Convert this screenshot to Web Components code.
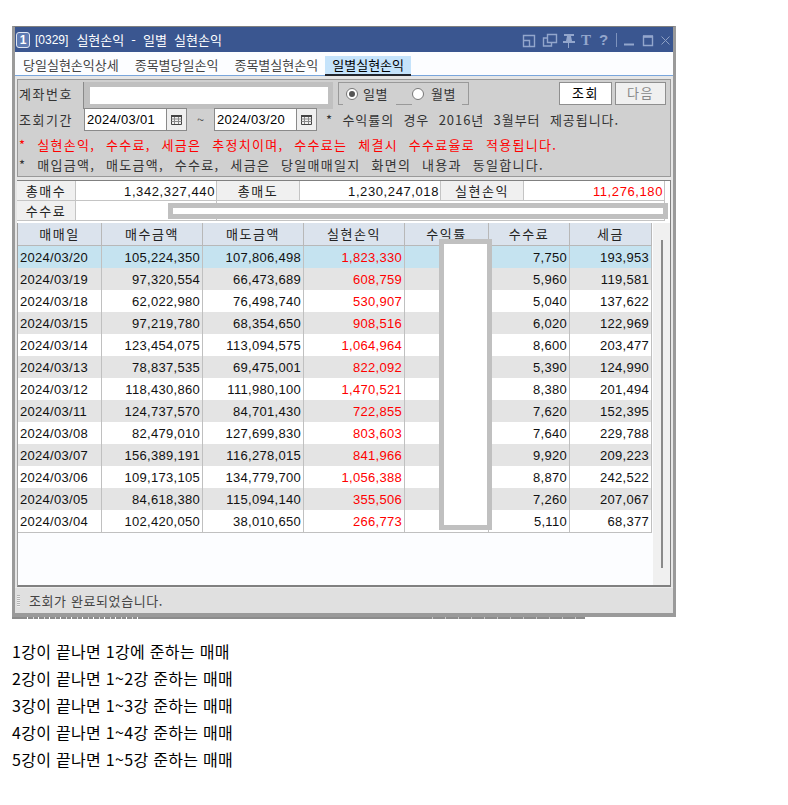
<!DOCTYPE html>
<html lang="ko">
<head>
<meta charset="utf-8">
<style>
  html, body { margin: 0; background: #fff; }
  body { padding: 26px 0 0 12px; font-family: "Noto Sans CJK KR", sans-serif; }
</style>
</head>
<body>
<trade-window></trade-window>
<note-list></note-list>

<script>
const KR = '"Noto Sans CJK KR", sans-serif';
const NUM = '"Liberation Sans", "Noto Sans CJK KR", sans-serif';

class TitleBar extends HTMLElement {
  constructor() {
    super();
    this.attachShadow({ mode: 'open' });
  }

  connectedCallback() {
    this.shadowRoot.innerHTML = `
      <style>
      :host { display: flex; align-items: center; height: 25px; background: #3a5690; color: #fff; padding-left: 1px; font: 13px ${KR}; }
      .logo { width: 12px; height: 14px; margin-right: 5px; border: 1px solid #dfe6f2; border-radius: 3px; background: #5f7cb4; color: #fff; font: bold 12px/14px "Liberation Sans", sans-serif; text-align: center; }
      .num { font-family: ${NUM}; font-size: 12px; margin-right: 8px; }
      .name { white-space: pre; word-spacing: 3.5px; }
      svg { margin-left: auto; display: block; }
      </style>
      <span class="logo">1</span>
      <span class="num">[0329]</span>
      <span class="name">실현손익 - 일별 실현손익</span>
      <svg width="152" height="25" viewBox="0 0 152 25" fill="none" stroke="#93a6cc" stroke-width="1.4">
        <path d="M2.500 8.500h11v11h-11zM2.500 13.500h6v6"/>
        <path d="M26.500 7.500h9v8h-9zM26.500 11h-4v8h8v-3.500"/>
        <path d="M43 7h10v2h-3l1 5h3v2H42v-2h3l1-5h-3zM48 16v5" fill="#93a6cc" stroke="none"/>
        <path d="M47.500 16v5" stroke-width="1"/>
        <text x="60" y="18" fill="#93a6cc" stroke="none" font-family="Liberation Serif" font-weight="700" font-size="15">T</text>
        <text x="78" y="18" fill="#93a6cc" stroke="none" font-family="Liberation Sans" font-weight="700" font-size="15">?</text>
        <path d="M95.500 6v14" stroke="#7e93bd" stroke-width="1"/>
        <path d="M103 17.500h10" stroke-width="2"/>
        <path d="M122.500 9.500h9v9h-9z"/><path d="M122 9.500h10" stroke-width="2.500"/>
        <path d="M140.500 9.500l8 8M148.500 9.500l-8 8" stroke="#8ea0c4" stroke-width="1"/>
      </svg>
    `;
  }
}

class TabBar extends HTMLElement {
  constructor() {
    super();
    this.attachShadow({ mode: 'open' });
  }

  connectedCallback() {
    this.shadowRoot.innerHTML = `
      <style>
      :host { display: flex; box-sizing: border-box; height: 24px; padding-left: 8px; background: #fcfdff; border-bottom: 1px solid #7aa6dc; font: 13px ${KR}; color: #444; }
      .tab { height: 20px; margin-top: 4px; line-height: 18px; white-space: nowrap; box-sizing: border-box; margin-right: 16px; }
      .tab:nth-of-type(3) { margin-right: 7px; }
      .on { width: 86px; margin-right: 0; text-align: center; background: #c5e3fb; color: #000; border-bottom: 2px solid #23262e; }
      </style>
      <div class="tab">당일실현손익상세</div>
      <div class="tab">종목별당일손익</div>
      <div class="tab">종목별실현손익</div>
      <div class="tab on">일별실현손익</div>
    `;
  }
}

class MaskBox extends HTMLElement {
  constructor() {
    super();
    this.attachShadow({ mode: 'open' });
  }

  connectedCallback() {
    this.shadowRoot.innerHTML = `
      <style>
      :host { display: block; box-sizing: border-box; background: #fff; border: 5px solid #c0c0c0; }
      </style>
    `;
  }
}

class DateField extends HTMLElement {
  constructor() {
    super();
    this.attachShadow({ mode: 'open' });
  }

  connectedCallback() {
    this.shadowRoot.innerHTML = `
      <style>
      :host { display: flex; height: 23px; box-sizing: border-box; border: 1px solid #8a8a8a; width: 103px; background: #fff; }
      .v { width: 82px; border-right: 1px solid #8a8a8a; font: 13px/21px ${NUM}; letter-spacing: .3px; padding-left: 2px; box-sizing: border-box; color: #000; }
      .b { flex: 1; display: flex; align-items: center; justify-content: center; background: #efefef; }
      </style>
      <div class="v"><slot></slot></div>
      <div class="b">
        <svg width="11" height="11" viewBox="0 0 11 11" fill="none" stroke="#444">
          <path d="M.5 1.500h10v9H.5z"/><path d="M0 2h11" stroke-width="2"/>
          <path d="M.5 5h10M.5 7.500h10M3.500 3v7M7.500 3v7" stroke="#888"/>
        </svg>
      </div>
    `;
  }
}

class RadioGroup extends HTMLElement {
  constructor() {
    super();
    this.attachShadow({ mode: 'open' });
  }

  connectedCallback() {
    this.shadowRoot.innerHTML = `
      <style>
      :host { display: flex; align-items: center; position: relative; box-sizing: border-box; width: 131px; height: 23px; border: 1px solid #999; padding-left: 7px; font: 13px ${KR}; color: #333; letter-spacing: .5px; }
      .r { box-sizing: border-box; width: 12px; height: 12px; border: 1px solid #777; border-radius: 50%; background: #fff; margin-right: 5px; display: flex; align-items: center; justify-content: center; }
      .r.on::after { content: ""; width: 6px; height: 6px; border-radius: 50%; background: #555; }
      .gap { width: 24px; }
      .cut { position: absolute; left: 4px; bottom: -1px; width: 53px; height: 1px; background: #d0d0d0; }
      .cut.b { left: 73px; width: 50px; }
      </style>
      <span class="r on"></span><span>일별</span><span class="gap"></span>
      <span class="r" style="margin-right:7px"></span><span>월별</span>
      <span class="cut"></span><span class="cut b"></span>
    `;
  }
}

class QueryPanel extends HTMLElement {
  constructor() {
    super();
    this.attachShadow({ mode: 'open' });
  }

  connectedCallback() {
    this.shadowRoot.innerHTML = `
      <style>
      :host { display: block; box-sizing: border-box; height: 98px; margin: 3px 2px 0; background: #d0d0d0; border: 1px solid #999; font: 13px ${KR}; color: #333; letter-spacing: 1.3px; }
      .row { display: flex; align-items: center; padding-left: 1px; white-space: nowrap; }
      .r1 { height: 27px; align-items: flex-start; padding-top: 2px; box-sizing: border-box; }
      .r2 { height: 24px; }
      .r3 { height: 20px; box-sizing: border-box; padding-top: 2px; word-spacing: 5.900px; }
      .red { margin-top: 2px; color: #f00; }
      .label { width: 65px; flex: none; letter-spacing: 1.500px; }
      .r1 .label { line-height: 24px; }
      mask-box.acct { width: 249px; height: 27px; margin-right: 5px; border-left: 6px solid #c0c0c0; box-shadow: -1px 0 0 #8a8a8a; }
      .btn { box-sizing: border-box; height: 23px; border: 1px solid #8f8f8f; background: #fff; color: #000; text-align: center; font-size: 13px; line-height: 20px; letter-spacing: 1.500px; }
      .go { width: 53px; margin-left: 90px; }
      .next { width: 51px; margin-left: 3px; background: #f0f0f0; color: #888; }
      .til { width: 27px; text-align: center; color: #555; letter-spacing: 0; }
      .note { margin-left: 9px; letter-spacing: .95px; word-spacing: 4.800px; }
      </style>
      <div class="row r1">
        <span class="label">계좌번호</span>
        <mask-box class="acct"></mask-box>
        <radio-group></radio-group>
        <div class="btn go">조회</div>
        <div class="btn next">다음</div>
      </div>
      <div class="row r2">
        <span class="label">조회기간</span>
        <date-field>2024/03/01</date-field>
        <span class="til">~</span>
        <date-field>2024/03/20</date-field>
        <span class="note">* 수익률의 경우 2016년 3월부터 제공됩니다.</span>
      </div>
      <div class="row r3 red">* 실현손익, 수수료, 세금은 추정치이며, 수수료는 체결시 수수료율로 적용됩니다.</div>
      <div class="row r3">* 매입금액, 매도금액, 수수료, 세금은 당일매매일지 화면의 내용과 동일합니다.</div>
    `;
  }
}

class SummaryTable extends HTMLElement {
  constructor() {
    super();
    this.attachShadow({ mode: 'open' });
  }

  connectedCallback() {
    this.shadowRoot.innerHTML = `
      <style>
      :host { display: block; position: relative; box-sizing: border-box; margin: 3px 2px 0; height: 43px; background: #fff; border-top: 1px solid #808080; border-right: 1px solid #808080; }
      .grid { display: grid; grid-template-columns: 59px 141px 83px 141px 83px 141px; grid-auto-rows: 20px; }
      .l, .v { box-sizing: border-box; border-right: 1px solid #c4c4c4; border-bottom: 1px solid #c4c4c4; }
      .l { background: #f0f0f0; text-align: center; font: 13px/20px ${KR}; letter-spacing: 1.500px; color: #222; }
      .v { background: #fff; text-align: right; padding-right: 1px; font: 13px/21px ${NUM}; letter-spacing: .6px; color: #111; overflow: hidden; }
      .red { color: #f00; }
      mask-box { position: absolute; left: 151px; top: 22px; width: 500px; height: 16px; }
      </style>
      <div class="grid">
        <div class="l">총매수</div><div class="v">1,342,327,440</div>
        <div class="l">총매도</div><div class="v">1,230,247,018</div>
        <div class="l">실현손익</div><div class="v red">11,276,180</div>
        <div class="l">수수료</div><div class="v"></div>
        <div class="v" style="grid-column: span 4"></div>
      </div>
      <mask-box></mask-box>
    `;
  }
}

const ROWS = [
  ['2024/03/20', '105,224,350', '107,806,498', '1,823,330', '7,750', '193,953'],
  ['2024/03/19', '97,320,554', '66,473,689', '608,759', '5,960', '119,581'],
  ['2024/03/18', '62,022,980', '76,498,740', '530,907', '5,040', '137,622'],
  ['2024/03/15', '97,219,780', '68,354,650', '908,516', '6,020', '122,969'],
  ['2024/03/14', '123,454,075', '113,094,575', '1,064,964', '8,600', '203,477'],
  ['2024/03/13', '78,837,535', '69,475,001', '822,092', '5,390', '124,990'],
  ['2024/03/12', '118,430,860', '111,980,100', '1,470,521', '8,380', '201,494'],
  ['2024/03/11', '124,737,570', '84,701,430', '722,855', '7,620', '152,395'],
  ['2024/03/08', '82,479,010', '127,699,830', '803,603', '7,640', '229,788'],
  ['2024/03/07', '156,389,191', '116,278,015', '841,966', '9,920', '209,223'],
  ['2024/03/06', '109,173,105', '134,779,700', '1,056,388', '8,870', '242,522'],
  ['2024/03/05', '84,618,380', '115,094,140', '355,506', '7,260', '207,067'],
  ['2024/03/04', '102,420,050', '38,010,650', '266,773', '5,110', '68,377'],
];

class DailyGrid extends HTMLElement {
  constructor() {
    super();
    this.attachShadow({ mode: 'open' });
  }

  connectedCallback() {
    const heads = ['매매일', '매수금액', '매도금액', '실현손익', '수익률', '수수료', '세금'];
    const row = (r, i) => {
      const cls = i == 0 ? 'sel' : i % 2 ? 'alt' : '';
      return `<div class="c d ${cls}">${r[0]}</div><div class="c ${cls}">${r[1]}</div><div class="c ${cls}">${r[2]}</div>` +
        `<div class="c red ${cls}">${r[3]}</div><div class="c ${cls}"></div><div class="c ${cls}">${r[4]}</div><div class="c ${cls}">${r[5]}</div>`;
    };
    this.shadowRoot.innerHTML = `
      <style>
      :host { display: flex; position: relative; box-sizing: border-box; margin: 0 2px; height: 364px; background: #fcfdff; border-bottom: 2px solid #808080; border-right: 1px solid #808080; border-left: 1px solid #a0a0a0; }
      .grid { display: grid; width: 634px; align-self: flex-start; grid-template-columns: 84px 101px 101px 101px 84px 81px 82px; grid-template-rows: 23px; grid-auto-rows: 22px; }
      .h { box-sizing: border-box; background: #dbe3ed; border-right: 1px solid #b8b8b8; border-bottom: 1px solid #b8b8b8; text-align: center; font: 13px/21px ${KR}; letter-spacing: 1.500px; color: #222; }
      .c { box-sizing: border-box; height: 22px; overflow: hidden; background: #fff; border-right: 1px solid #c0c0c0; text-align: right; padding-right: 2px; font: 13px/23px ${NUM}; letter-spacing: .3px; color: #111; }
      .d { text-align: left; padding-left: 2px; }
      .sel { background: #c5e3f0; }
      .alt { background: #e4e4e4; }
      .red { color: #f00; }
      .end { grid-column: 1 / -1; height: 1px; background: #c0c0c0; }
      .scroll { flex: 1; margin-left: 1px; background: #f0f0f0; display: flex; justify-content: center; padding-top: 17px; }
      .thumb { width: 2px; height: 328px; background: #8a8a8a; }
      mask-box { position: absolute; left: 421px; top: 16px; width: 53px; height: 291px; }
      </style>
      <div class="grid">
        ${heads.map(h => `<div class="h">${h}</div>`).join('')}
        ${ROWS.map(row).join('')}
        <div class="end"></div>
      </div>
      <div class="scroll"><div class="thumb"></div></div>
      <mask-box></mask-box>
    `;
  }
}

class StatusBar extends HTMLElement {
  constructor() {
    super();
    this.attachShadow({ mode: 'open' });
  }

  connectedCallback() {
    this.shadowRoot.innerHTML = `
      <style>
      :host { display: flex; align-items: center; height: 26px; background: #e0e0e0; border-top: 1px solid #ececec; box-sizing: border-box; font: 13px ${KR}; color: #444; letter-spacing: .6px; }
      .grip { width: 3px; height: 12px; margin: 0 9px 0 2px; background: repeating-linear-gradient(#b4b4b4 0 1px, #eee 1px 2px); }
      </style>
      <span class="grip"></span><slot></slot>
    `;
  }
}

class TradeWindow extends HTMLElement {
  constructor() {
    super();
    this.attachShadow({ mode: 'open' });
  }

  connectedCallback() {
    this.shadowRoot.innerHTML = `
      <style>
      :host { display: block; position: relative; box-sizing: border-box; width: 664px; height: 591px; background: #e6e6e6; border: 3px solid #9a9a9a; border-top: 1px solid #808080; border-bottom-width: 4px; }
      .strip { position: absolute; left: -3px; bottom: -6px; width: 573px; height: 2px; background: #8c8c8c; }
      .strip i { position: absolute; top: 0; height: 2px; }
      .a { left: 15px; width: 115px; background: repeating-linear-gradient(90deg, #fff 0 1px, transparent 1px 6px, #dcdcdc 6px 7px, transparent 7px 11px); }
      .b { left: 420px; width: 150px; background: repeating-linear-gradient(90deg, #c8c8c8 0 1px, transparent 1px 13px); }
      </style>
      <title-bar></title-bar>
      <tab-bar></tab-bar>
      <query-panel></query-panel>
      <summary-table></summary-table>
      <daily-grid></daily-grid>
      <status-bar>조회가 완료되었습니다.</status-bar>
      <span class="strip"><i class="a"></i><i class="b"></i></span>
    `;
  }
}

class NoteList extends HTMLElement {
  constructor() {
    super();
    this.attachShadow({ mode: 'open' });
  }

  connectedCallback() {
    const lines = ['1강이 끝나면 1강에 준하는 매매', '2강이 끝나면 1~2강 준하는 매매', '3강이 끝나면 1~3강 준하는 매매', '4강이 끝나면 1~4강 준하는 매매', '5강이 끝나면 1~5강 준하는 매매'];
    this.shadowRoot.innerHTML = `
      <style>
      :host { display: block; margin-top: 21px; font: 16px/27px ${KR}; letter-spacing: .3px; color: #000; }
      </style>
      ${lines.map(l => `<div>${l}</div>`).join('')}
    `;
  }
}

customElements.define('title-bar', TitleBar);
customElements.define('tab-bar', TabBar);
customElements.define('mask-box', MaskBox);
customElements.define('date-field', DateField);
customElements.define('radio-group', RadioGroup);
customElements.define('query-panel', QueryPanel);
customElements.define('summary-table', SummaryTable);
customElements.define('daily-grid', DailyGrid);
customElements.define('status-bar', StatusBar);
customElements.define('trade-window', TradeWindow);
customElements.define('note-list', NoteList);
</script>
</body>
</html>
